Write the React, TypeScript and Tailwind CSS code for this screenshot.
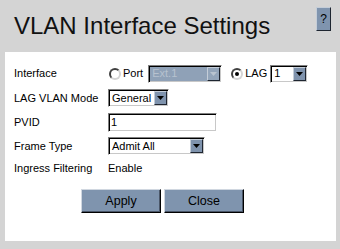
import React from "react";

function Arrow({ disabled }: { disabled?: boolean }) {
  return (
    <div
      className={
        "flex h-full w-[13px] shrink-0 items-center justify-center border border-t-[#c4cdd8] border-l-[#c4cdd8] border-b-[#1e2530] border-r-[#1e2530] " +
        (disabled ? "bg-[#93a5ba]" : "bg-[#7f93ad]")
      }
    >
      <svg width="7" height="4" viewBox="0 0 7 4">
        <polygon points="0,0 7,0 3.5,4" fill={disabled ? "#b9c4d0" : "#000"} />
      </svg>
    </div>
  );
}

function Select({
  width,
  value,
  disabled,
}: {
  width: string;
  value: string;
  disabled?: boolean;
}) {
  return (
    <div
      className={
        "flex h-[18px] shrink-0 items-stretch border border-t-[#808080] border-l-[#808080] border-b-[#ffffff] border-r-[#ffffff] shadow-[inset_1px_1px_0_#000,inset_-1px_-1px_0_#c8c8c8] p-[1px] " +
        width +
        (disabled ? " bg-[#8fa1b7]" : " bg-white")
      }
    >
      <div
        className={
          "flex flex-1 items-center pl-[2px] text-[11px] leading-none " +
          (disabled ? "text-[#b7c2cf]" : "text-black")
        }
      >
        {value}
      </div>
      <Arrow disabled={disabled} />
    </div>
  );
}

function Radio({ checked }: { checked?: boolean }) {
  return (
    <div className="flex h-[12px] w-[12px] shrink-0 items-center justify-center rounded-full border-2 border-t-[#404040] border-l-[#404040] border-b-[#d4d4d4] border-r-[#d4d4d4] bg-white">
      {checked && <div className="h-[4px] w-[4px] rounded-full bg-black" />}
    </div>
  );
}

function Row({
  label,
  h,
  children,
}: {
  label: string;
  h: string;
  children: React.ReactNode;
}) {
  return (
    <div className={"flex items-center " + h}>
      <div className="w-[94px] shrink-0 text-[11px] leading-none text-black">
        {label}
      </div>
      <div className="flex items-center">{children}</div>
    </div>
  );
}

function Btn({ label }: { label: string }) {
  return (
    <div className="flex h-[24px] w-[80px] items-center justify-center border border-t-[#d0d7e0] border-l-[#d0d7e0] border-b-[#000] border-r-[#000] bg-[#7f94ae] shadow-[inset_-1px_-1px_0_#4a5668] text-[12.5px] leading-none text-black">
      {label}
    </div>
  );
}

export default function App() {
  return (
    <div className="h-[249px] w-[340px] overflow-hidden bg-[#d4d4d4] font-['Liberation_Sans',Arial,sans-serif]">
      <div className="flex h-[52px] items-start justify-between pl-[14px] pr-[9px]">
        <div className="pt-[14px] text-[24px] leading-[24px] text-[#111]">
          VLAN Interface Settings
        </div>
        <div className="mt-[7px] flex h-[24px] w-[15px] items-center justify-center border border-t-[#c4cdd8] border-l-[#c4cdd8] border-b-[#1e2530] border-r-[#1e2530] bg-[#7f94ae] text-[12px] leading-none text-black">
          ?
        </div>
      </div>
      <div className="ml-[5px] h-[189px] w-[331px] bg-white pl-[9px] pt-[9px]">
        <Row label="Interface" h="h-[25px]">
          <div className="ml-[1px]">
            <Radio />
          </div>
          <span className="ml-[2px] text-[11px] leading-none">Port</span>
          <div className="ml-[5px]">
            <Select width="w-[74px]" value="Ext.1" disabled />
          </div>
          <div className="ml-[9px]">
            <Radio checked />
          </div>
          <span className="ml-[2px] text-[11px] leading-none">LAG</span>
          <div className="ml-[3px]">
            <Select width="w-[38px]" value="1" />
          </div>
        </Row>
        <Row label="LAG VLAN Mode" h="h-[24px]">
          <Select width="w-[61px]" value="General" />
        </Row>
        <Row label="PVID" h="h-[24px]">
          <div className="flex h-[19px] w-[109px] items-center border border-t-[#808080] border-l-[#808080] border-b-[#ffffff] border-r-[#ffffff] bg-white pl-[2px] text-[11px] leading-none shadow-[inset_1px_1px_0_#000,inset_-1px_-1px_0_#c8c8c8]">
            1
          </div>
        </Row>
        <Row label="Frame Type" h="h-[24px]">
          <Select width="w-[97px]" value="Admit All" />
        </Row>
        <Row label="Ingress Filtering" h="h-[20px]">
          <span className="text-[11px] leading-none">Enable</span>
        </Row>
        <div className="mt-[11px] flex gap-[3px] pl-[67px]">
          <Btn label="Apply" />
          <Btn label="Close" />
        </div>
      </div>
    </div>
  );
}
